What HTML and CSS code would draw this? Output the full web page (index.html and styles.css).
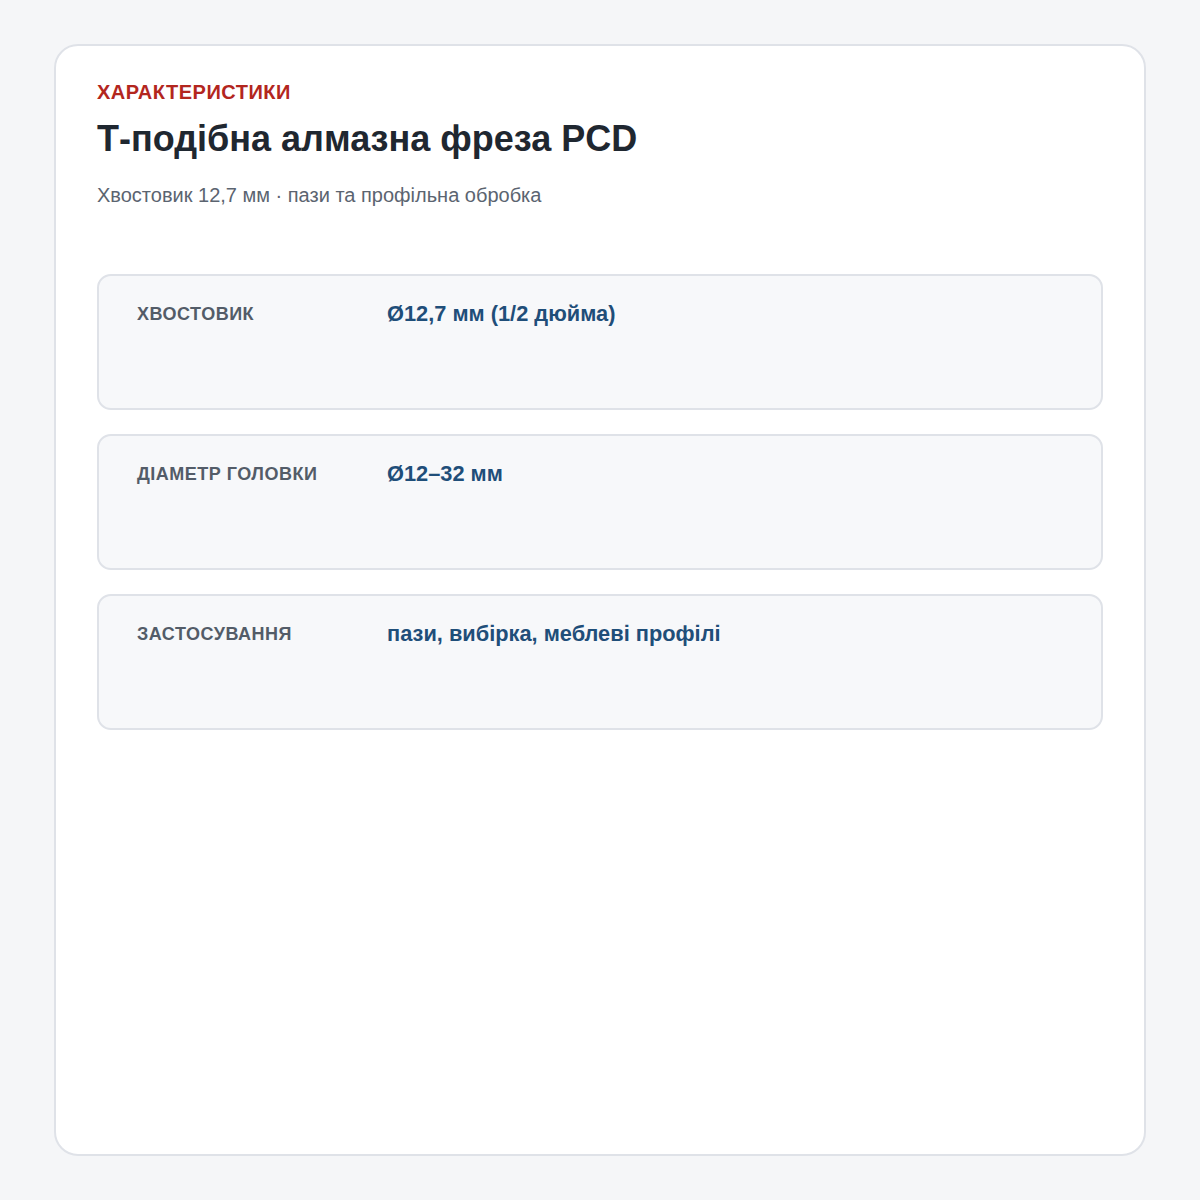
FILE: index.html
```html
<!DOCTYPE html>
<html lang="uk">
<head>
<meta charset="utf-8">
<link rel="stylesheet" href="styles.css">
</head>
<body>
<main class="card">
  <div class="eyebrow">ХАРАКТЕРИСТИКИ</div>
  <h1 class="title">Т-подібна алмазна фреза PCD</h1>
  <p class="subtitle">Хвостовик 12,7 мм · пази та профільна обробка</p>
  <div class="specs">
    <div class="spec">
      <div class="label">ХВОСТОВИК</div>
      <div class="value">Ø12,7 мм (1/2 дюйма)</div>
    </div>
    <div class="spec">
      <div class="label">ДІАМЕТР ГОЛОВКИ</div>
      <div class="value">Ø12–32 мм</div>
    </div>
    <div class="spec">
      <div class="label">ЗАСТОСУВАННЯ</div>
      <div class="value">пази, вибірка, меблеві профілі</div>
    </div>
  </div>
</main>
</body>
</html>
```
FILE: styles.css
```css
* { box-sizing: border-box; }
html, body { margin: 0; }
body {
  background: #f5f6f8;
  padding: 44px 54px;
  font-family: "Liberation Sans", Arial, sans-serif;
  height: 1200px;
}
.card {
  background: #ffffff;
  border: 2px solid #dfe2e8;
  border-radius: 24px;
  height: 1112px;
  padding: 34px 41px;
}
.eyebrow {
  color: #b3261e;
  font-size: 20px;
  font-weight: 700;
  line-height: 24px;
  letter-spacing: 0.5px;
}
.title {
  margin: 13px 0 0;
  color: #1f2730;
  font-size: 36px;
  font-weight: 700;
  line-height: 44px;
}
.subtitle {
  margin: 22px 0 0;
  color: #5b6470;
  font-size: 20px;
  line-height: 24px;
}
.specs {
  margin-top: 67px;
  display: flex;
  flex-direction: column;
  gap: 24px;
}
.spec {
  display: grid;
  grid-template-columns: 250px 1fr;
  background: #f7f8fa;
  border: 2px solid #dfe2e8;
  border-radius: 14px;
  height: 136px;
  padding: 24px 38px;
}
.label {
  color: #535c68;
  font-size: 18px;
  font-weight: 700;
  line-height: 24px;
  letter-spacing: 0.5px;
  padding-top: 2px;
}
.value {
  color: #1f4e79;
  font-size: 21.8px;
  font-weight: 700;
  line-height: 28px;
}
```
